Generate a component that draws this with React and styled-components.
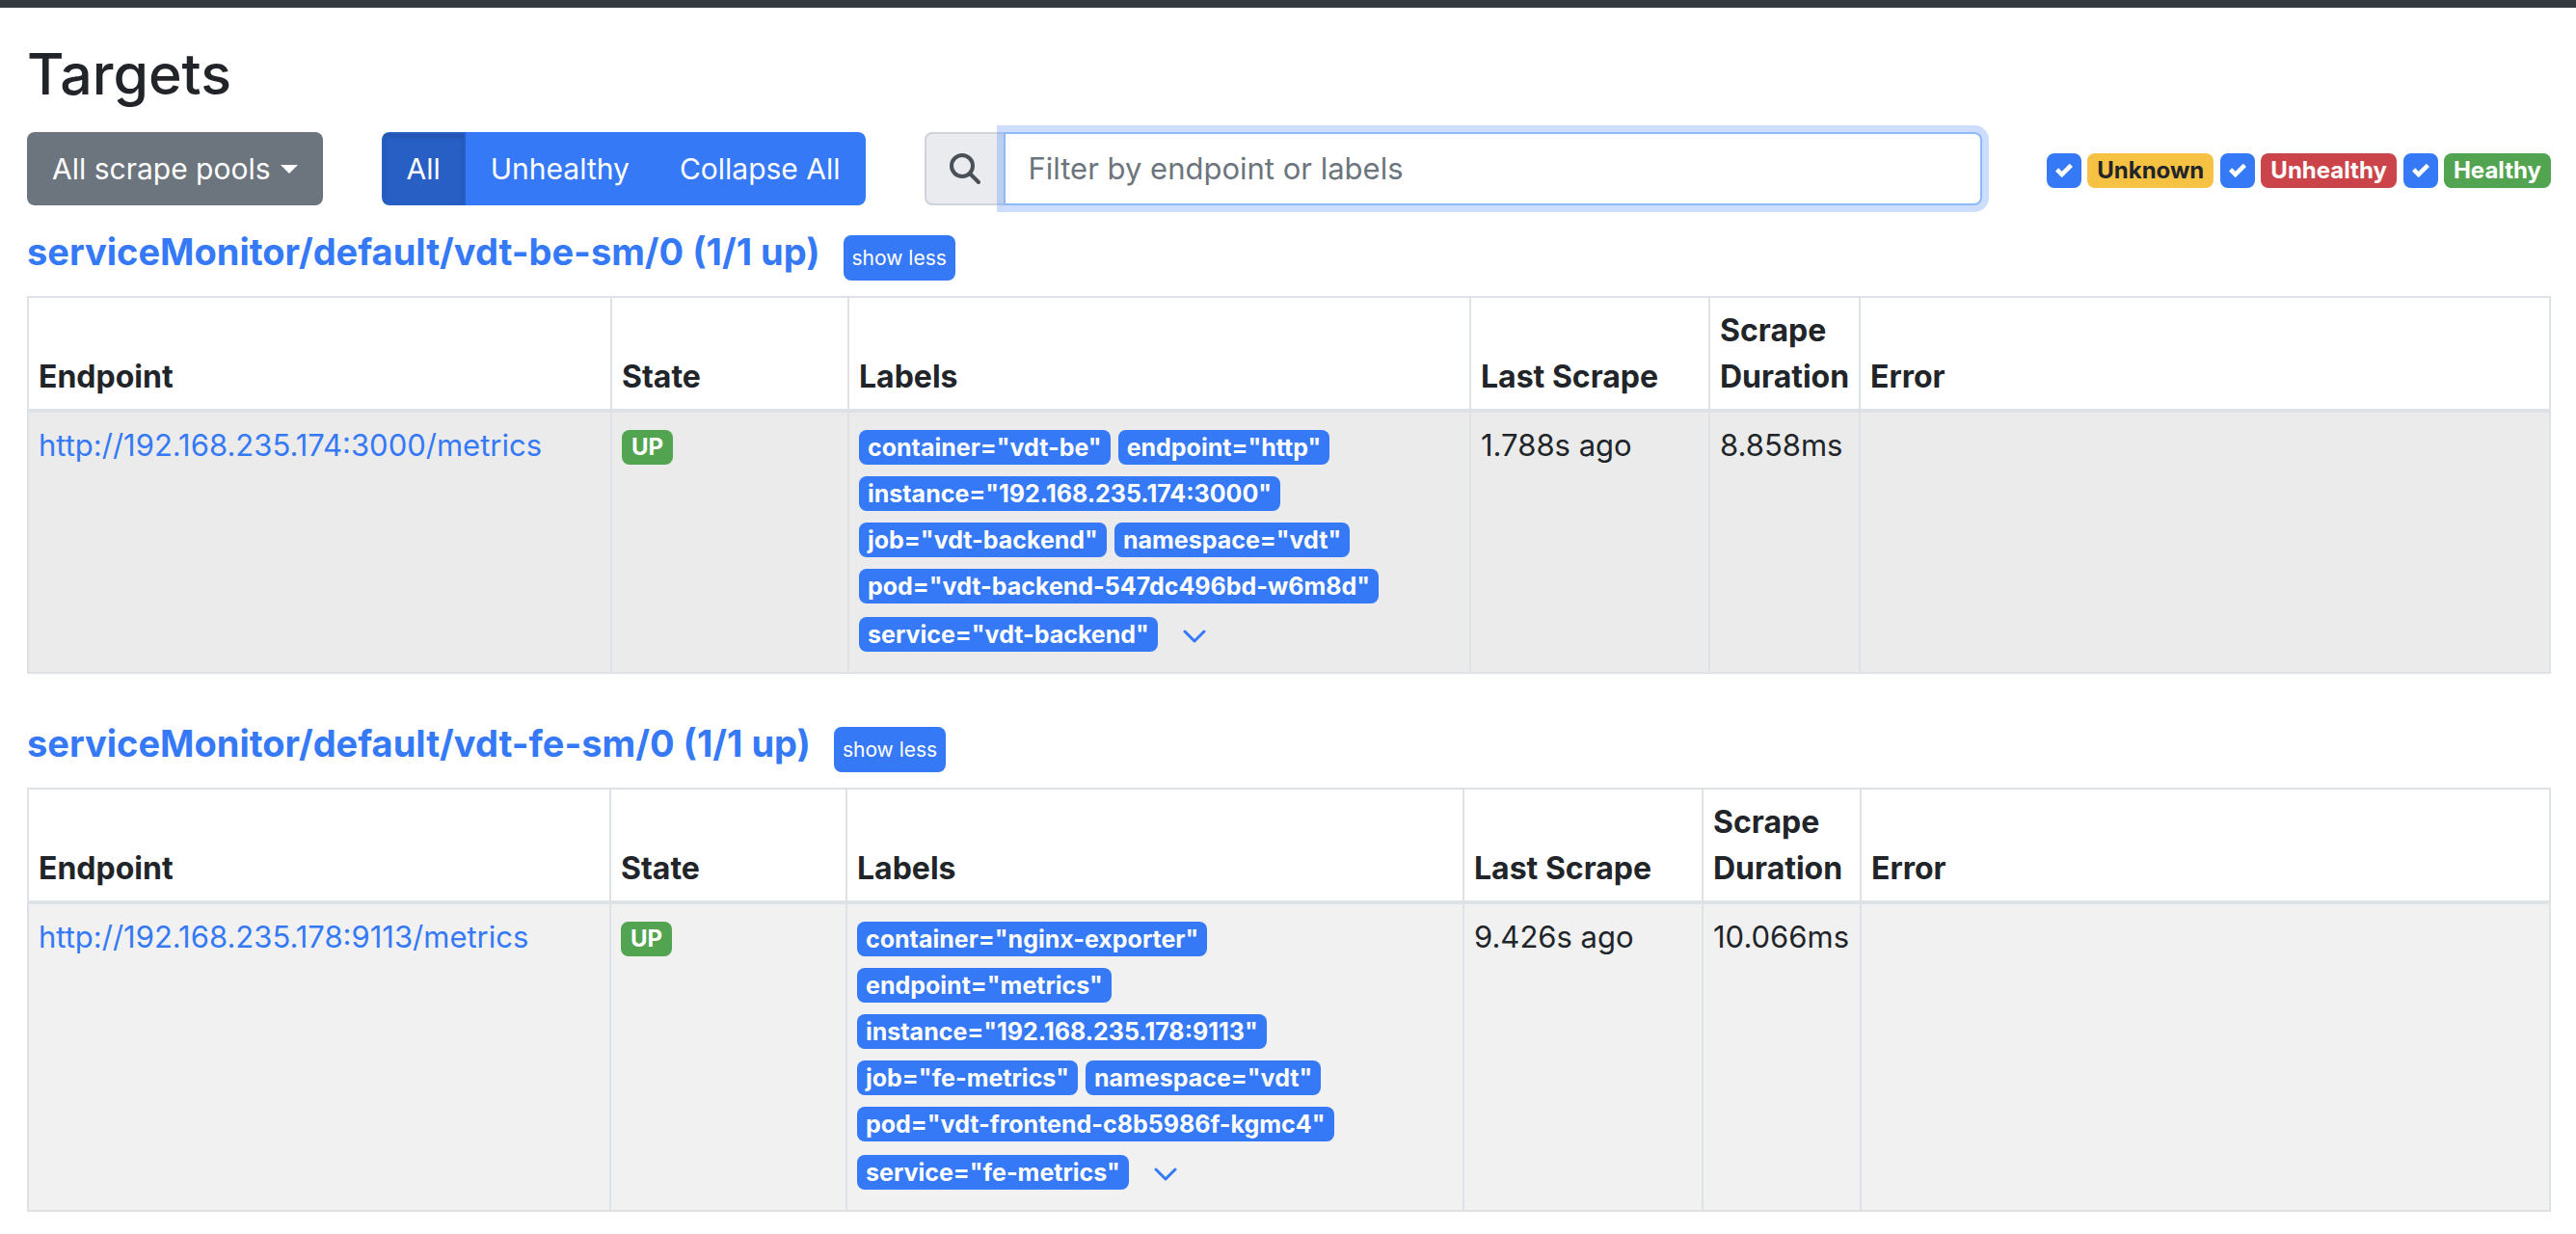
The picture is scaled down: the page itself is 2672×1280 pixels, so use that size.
import React, { useState } from "react";
import styled, { createGlobalStyle, css } from "styled-components";

const blue = "#3579f6";
const line = "#dee2e6";

const GlobalStyle = createGlobalStyle`
  *, *::before, *::after { box-sizing: border-box; }
  body {
    margin: 0;
    background: #fff;
    color: #212529;
    font-family: Inter, "Liberation Sans", sans-serif;
    font-size: 31px;
    line-height: 48px;
  }
  button, input { font: inherit; margin: 0; }
`;

const NavBar = styled.header`
  height: 8px;
  background: #343a40;
`;

const Page = styled.main`
  padding: 30px 26px 0 28px;
`;

const Title = styled.h2`
  margin: 0 0 22px;
  font-size: 59px;
  font-weight: 500;
  line-height: 77px;
`;

const Toolbar = styled.div`
  display: flex;
  align-items: center;
  gap: 61px;
  height: 76px;
`;

const buttonBase = css`
  border: 2px solid transparent;
  padding: 12px 24px;
  color: #fff;
  white-space: nowrap;
  cursor: pointer;
`;

const PoolButton = styled.button`
  ${buttonBase}
  && { font-size: 30px; }
  display: flex;
  align-items: center;
  gap: 10px;
  border-radius: 8px;
  background: #6c757d;
`;

const Caret = styled.span`
  border: 9px solid transparent;
  border-top-color: #fff;
  border-bottom: 0;
`;

const ButtonGroup = styled.div`
  display: flex;
  border-radius: 8px;
  overflow: hidden;
`;

const GroupButton = styled.button`
  ${buttonBase}
  && { font-size: 30px; }
  background: ${(p) => (p.$active ? "#285fc5" : blue)};
  ${(p) => p.$active && "box-shadow: inset 0 3px 5px rgba(0, 0, 0, 0.125);"}
`;

const Search = styled.label`
  display: flex;
  flex: 1;
  height: 76px;
`;

const SearchIcon = styled.span`
  display: flex;
  align-items: center;
  justify-content: center;
  width: 82px;
  border: 2px solid #ced4da;
  border-right: 0;
  border-radius: 8px 0 0 8px;
  background: #e9ebef;
`;

const SearchInput = styled.input`
  flex: 1;
  min-width: 0;
  padding: 12px 24px;
  border: 2px solid #8bb9fb;
  border-radius: 0 8px 8px 0;
  background: #fff;
  box-shadow: 0 0 0 7px rgba(53, 121, 246, 0.25);
  color: #495057;
  outline: none;
  &::placeholder { color: #6c757d; opacity: 1; }
`;

const Filters = styled.div`
  display: flex;
  gap: 7px;
  margin-left: 6px;
  padding-top: 4px;
`;

const FilterLabel = styled.label`
  display: flex;
  gap: 6px;
  cursor: pointer;
`;

const CheckBox = styled.span`
  display: grid;
  place-items: center;
  & > * { grid-area: 1 / 1; }
`;

const CheckInput = styled.input`
  appearance: none;
  width: 36px;
  height: 36px;
  border: 2px solid ${blue};
  border-radius: 8px;
  background: #fff;
  &:checked { background: ${blue}; }
`;

const badgeColors = {
  primary: [blue, "#fff"],
  warning: ["#f6c244", "#212529"],
  danger: ["#cb444a", "#fff"],
  success: ["#53a451", "#fff"],
};

const Badge = styled.span`
  display: inline-block;
  padding: 6px ${(p) => (p.$kind === "primary" ? 9 : 10)}px;
  border-radius: 8px;
  background: ${(p) => badgeColors[p.$kind][0]};
  color: ${(p) => badgeColors[p.$kind][1]};
  font-size: ${(p) => (p.$kind === "primary" ? 25 : 24)}px;
  font-weight: 700;
  line-height: 24px;
  white-space: nowrap;
`;

const Pool = styled.section`
  margin-bottom: 24px;
`;

const PoolHeader = styled.div`
  display: flex;
  align-items: flex-end;
  gap: 24px;
  height: 78px;
  margin-bottom: 16px;
`;

const PoolTitle = styled.h3`
  margin: 0;
  padding-bottom: 6px;
  font-size: 38px;
  font-weight: 700;
  line-height: 48px;
`;

const Link = styled.a`
  color: ${blue};
  text-decoration: none;
`;

const SmallButton = styled.button`
  height: 47px;
  padding: 0 9px;
  border: 0;
  border-radius: 8px;
  background: ${blue};
  color: #fff;
  && { font-size: 21px; }
  line-height: 47px;
  white-space: nowrap;
  cursor: pointer;
`;

const Table = styled.table`
  width: 100%;
  table-layout: fixed;
  border-collapse: collapse;
`;

const HeadCell = styled.th`
  padding: 10px 10px 9px;
  border: 2px solid ${line};
  border-bottom-width: 4px;
  font-size: 32px;
  font-weight: 700;
  text-align: left;
  vertical-align: bottom;
`;

const Row = styled.tr`
  background: ${(p) => (p.$hovered ? "#ebebeb" : "#f1f1f1")};
`;

const Cell = styled.td`
  padding: 10px;
  border: 2px solid ${line};
  vertical-align: top;
`;

const StateBox = styled.div`
  display: flex;
  padding-top: 8px;
`;

const Labels = styled.div`
  display: flex;
  flex-direction: column;
  gap: 12px;
  padding: 8px 0 11px;
`;

const LabelLine = styled.div`
  display: flex;
  align-items: center;
  gap: 8px;
  &:last-child { padding-top: 2px; }
`;

const MoreButton = styled.button`
  display: flex;
  padding: 4px 0 0 18px;
  border: 0;
  background: none;
  color: ${blue};
  cursor: pointer;
`;

const pools = [
  {
    name: "serviceMonitor/default/vdt-be-sm/0 (1/1 up)",
    hovered: true,
    columns: [605, 246, 645, 248, 156],
    endpoint: "http://192.168.235.174:3000/metrics",
    labels: [
      ['container="vdt-be"', 'endpoint="http"'],
      ['instance="192.168.235.174:3000"'],
      ['job="vdt-backend"', 'namespace="vdt"'],
      ['pod="vdt-backend-547dc496bd-w6m8d"'],
      ['service="vdt-backend"'],
    ],
    last: "1.788s ago",
    duration: "8.858ms",
  },
  {
    name: "serviceMonitor/default/vdt-fe-sm/0 (1/1 up)",
    hovered: false,
    columns: [604, 245, 640, 248, 164],
    endpoint: "http://192.168.235.178:9113/metrics",
    labels: [
      ['container="nginx-exporter"'],
      ['endpoint="metrics"'],
      ['instance="192.168.235.178:9113"'],
      ['job="fe-metrics"', 'namespace="vdt"'],
      ['pod="vdt-frontend-c8b5986f-kgmc4"'],
      ['service="fe-metrics"'],
    ],
    last: "9.426s ago",
    duration: "10.066ms",
  },
];

const headings = ["Endpoint", "State", "Labels", "Last Scrape", "Scrape Duration", "Error"];

const filters = [
  { name: "Unknown", kind: "warning" },
  { name: "Unhealthy", kind: "danger" },
  { name: "Healthy", kind: "success" },
];

function HealthFilter({ name, kind }) {
  const [checked, setChecked] = useState(true);
  return (
    <FilterLabel>
      <CheckBox>
        <CheckInput type="checkbox" checked={checked} onChange={() => setChecked(!checked)} />
        <svg width="18" height="18" viewBox="0 0 8 8" fill="#fff" aria-hidden="true">
          <path d="M6.564.75l-3.59 3.612-1.538-1.55L0 4.26l2.974 2.99L8 2.193z" />
        </svg>
      </CheckBox>
      <Badge $kind={kind}>{name}</Badge>
    </FilterLabel>
  );
}

function TargetPool({ pool }) {
  return (
    <Pool>
      <PoolHeader>
        <PoolTitle><Link href="#pool">{pool.name}</Link></PoolTitle>
        <SmallButton type="button">show less</SmallButton>
      </PoolHeader>
      <Table>
        <colgroup>
          {pool.columns.map((w, i) => <col key={i} width={w} />)}
          <col />
        </colgroup>
        <thead>
          <tr>{headings.map((h) => <HeadCell key={h}>{h}</HeadCell>)}</tr>
        </thead>
        <tbody>
          <Row $hovered={pool.hovered}>
            <Cell><Link href={pool.endpoint}>{pool.endpoint}</Link></Cell>
            <Cell><StateBox><Badge $kind="success">UP</Badge></StateBox></Cell>
            <Cell>
              <Labels>
                {pool.labels.map((group, i) => (
                  <LabelLine key={i}>
                    {group.map((l) => <Badge key={l} $kind="primary">{l}</Badge>)}
                    {i === pool.labels.length - 1 && (
                      <MoreButton type="button" aria-label="Show discovered labels">
                        <svg width="24" height="16" viewBox="0 0 24 16" fill="none" stroke="currentColor" strokeWidth="3" strokeLinecap="round" strokeLinejoin="round">
                          <path d="M2 3l10 10L22 3" />
                        </svg>
                      </MoreButton>
                    )}
                  </LabelLine>
                ))}
              </Labels>
            </Cell>
            <Cell>{pool.last}</Cell>
            <Cell>{pool.duration}</Cell>
            <Cell />
          </Row>
        </tbody>
      </Table>
    </Pool>
  );
}

export default function App() {
  return (
    <>
      <GlobalStyle />
      <NavBar />
      <Page>
        <Title>Targets</Title>
        <Toolbar>
          <PoolButton type="button">All scrape pools<Caret /></PoolButton>
          <ButtonGroup>
            <GroupButton type="button" $active>All</GroupButton>
            <GroupButton type="button">Unhealthy</GroupButton>
            <GroupButton type="button">Collapse All</GroupButton>
          </ButtonGroup>
          <Search>
            <SearchIcon>
              <svg width="32" height="32" viewBox="0 0 32 32" fill="none" stroke="#495057" strokeWidth="4" strokeLinecap="round" aria-hidden="true">
                <circle cx="13" cy="13" r="11" />
                <path d="M21 21l9 9" />
              </svg>
            </SearchIcon>
            <SearchInput type="text" aria-label="Filter" placeholder="Filter by endpoint or labels" />
          </Search>
          <Filters>
            {filters.map((f) => <HealthFilter key={f.name} {...f} />)}
          </Filters>
        </Toolbar>
        {pools.map((p) => <TargetPool key={p.name} pool={p} />)}
      </Page>
    </>
  );
}
